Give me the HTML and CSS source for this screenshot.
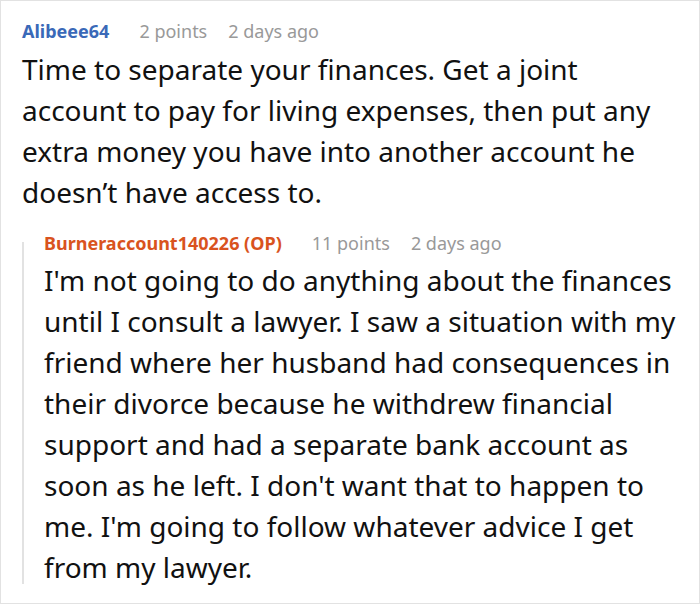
FILE: index.html
```html
<!DOCTYPE html>
<html>
<head>
<meta charset="utf-8">
<link rel="stylesheet" href="styles.css">
</head>
<body>
<div class="frame">
  <div class="comment">
    <div class="meta">
      <span class="author blue">Alibeee64</span>
      <span class="info">2 points</span>
      <span class="info">2 days ago</span>
    </div>
    <p class="text">Time to separate your finances. Get a joint account to pay for living expenses, then put any extra money you have into another account he doesn’t have access to.</p>
    <div class="reply">
      <div class="meta">
        <span class="author orange">Burneraccount140226 (OP)</span>
        <span class="info">11 points</span>
        <span class="info">2 days ago</span>
      </div>
      <p class="text">I'm not going to do anything about the finances until I consult a lawyer. I saw a situation with my friend where her husband had consequences in their divorce because he withdrew financial support and had a separate bank account as soon as he left. I don't want that to happen to me. I'm going to follow whatever advice I get from my lawyer.</p>
    </div>
  </div>
</div>
</body>
</html>
```

FILE: styles.css
```css
html, body {
  margin: 0;
  padding: 0;
  background: #fff;
}
body {
  font-family: "Noto Sans", "Open Sans", sans-serif;
  color: #111;
}
.frame {
  width: 700px;
  height: 604px;
  box-sizing: border-box;
  border: 1px solid #e2e2e2;
  overflow: hidden;
}
.comment {
  padding: 18px 0 0 21px;
}
.meta {
  display: flex;
  gap: 21px;
  font-size: 18px;
  line-height: 24px;
}
.author {
  font-weight: 700;
  margin-right: 9px;
}
.blue { color: #3a69b8; }
.orange { color: #d9531e; }
.info { color: #999; }
.text {
  margin: 6px 0 0 0;
  font-size: 28px;
  line-height: 41px;
  padding-right: 20px;
}
.reply {
  margin-top: 18px;
  padding-left: 22px;
  background: linear-gradient(#e2e2e2, #e2e2e2) no-repeat 0 11px / 2px calc(100% - 15px);
}
.reply .text {
  margin-top: 5px;
}
```
